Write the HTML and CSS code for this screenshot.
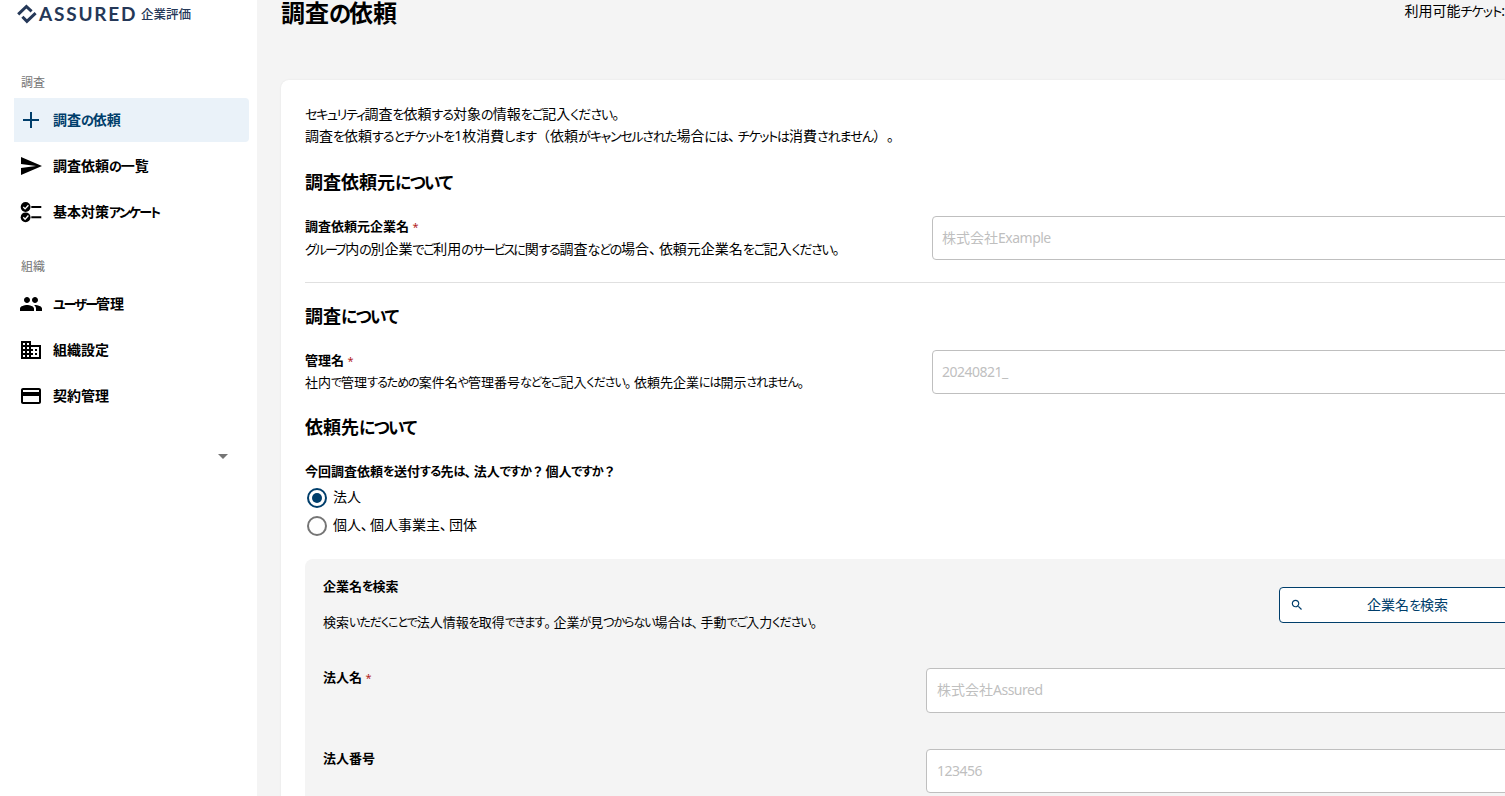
FILE: index.html
```html
<!DOCTYPE html>
<html lang="ja">
<head>
<meta charset="utf-8">
<title>調査の依頼</title>
<link rel="stylesheet" href="styles.css">
</head>
<body>
<div class="app">
  <aside class="sidebar">
    <div class="logo">
      <svg class="logo-mark" width="20" height="20" viewBox="0 0 20 20"><path d="M1.2 10.4 9.4 2.5 14.6 7.4M5.4 12.7 9.9 17.3 18.6 9.1" fill="none" stroke="#253858" stroke-width="3"/></svg>
      <span class="logo-name">ASSURED</span><span class="logo-sub">企業評価</span>
    </div>
    <div class="nav-label">調査</div>
    <nav class="nav">
      <a class="nav-item active"><svg viewBox="0 0 24 24"><path d="M20 13h-7v7h-2v-7H4v-2h7V4h2v7h7v2z"/></svg><span>調査<i class="h">の</i>依頼</span></a>
      <a class="nav-item"><svg viewBox="0 0 24 24"><path d="M2.01 21 23 12 2.01 3 2 10l15 2-15 2z"/></svg><span>調査依頼<i class="h">の</i>一覧</span></a>
      <a class="nav-item"><svg viewBox="0 0 24 24"><circle cx="6.6" cy="7" r="4.9"/><circle cx="6.6" cy="17.3" r="4.9"/><path d="M12.3 6h10v2h-10zM12.3 16.2h10v2h-10z"/><path d="m4.3 7 1.8 1.9 3.3-3.7M4.3 17.3l1.8 1.9 3.3-3.7" fill="none" stroke="#fff" stroke-width="1.3"/></svg><span>基本対策<i class="t">アンケート</i></span></a>
    </nav>
    <div class="nav-label second">組織</div>
    <nav class="nav">
      <a class="nav-item"><svg viewBox="0 0 24 24"><path d="M16 11c1.66 0 2.99-1.34 2.99-3S17.66 5 16 5s-3 1.34-3 3 1.34 3 3 3zm-8 0c1.66 0 2.99-1.34 2.99-3S9.66 5 8 5 5 6.34 5 8s1.34 3 3 3zm0 2c-2.33 0-7 1.17-7 3.5V19h14v-2.500C15 14.170 10.330 13 8 13zm8 0c-.29 0-.62.02-.97.05 1.16.84 1.970 1.970 1.970 3.450V19h6v-2.500c0-2.330-4.670-3.500-7-3.500z"/></svg><span><i class="t">ユーザー</i>管理</span></a>
      <a class="nav-item"><svg viewBox="0 0 24 24"><path d="M12 7V3H2v18h20V7H12zM6 19H4v-2h2v2zm0-4H4v-2h2v2zm0-4H4V9h2v2zm0-4H4V5h2v2zm4 12H8v-2h2v2zm0-4H8v-2h2v2zm0-4H8V9h2v2zm0-4H8V5h2v2zm10 12h-8v-2h2v-2h-2v-2h2v-2h-2V9h8v10zm-2-8h-2v2h2v-2zm0 4h-2v2h2v-2z"/></svg><span>組織設定</span></a>
      <a class="nav-item"><svg viewBox="0 0 24 24"><path d="M20 4H4c-1.110 0-1.990.89-1.990 2L2 18c0 1.110.89 2 2 2h16c1.110 0 2-.89 2-2V6c0-1.110-.89-2-2-2zm0 14H4v-6h16v6zm0-10H4V6h16v2z"/></svg><span>契約管理</span></a>
    </nav>
    <div class="account"><svg width="24" height="24" viewBox="0 0 24 24"><path d="m7 10 5 5 5-5z"/></svg></div>
  </aside>

  <main class="main">
    <header class="topbar">
      <h1>調査<i class="h">の</i>依頼</h1>
      <div class="tickets">利用可能<i class="t">チケット</i>:</div>
    </header>
    <section class="card">
      <p class="lead"><i class="t">セキュリティ</i>調査<i class="h">を</i>依頼<i class="h">する</i>対象<i class="h">の</i>情報<i class="h">をご</i>記入<i class="h">ください</i><i class="p">。</i><br>調査<i class="h">を</i>依頼<i class="h">すると</i><i class="t">チケット</i><i class="h">を</i>1枚消費<i class="h">します</i><span class="full">（</span>依頼<i class="h">が</i><i class="t">キャンセル</i><i class="h">された</i>場合<i class="h">には</i><i class="p">、</i><i class="t">チケット</i><i class="h">は</i>消費<i class="h">されません</i><span class="full">）。</span></p>

      <h2>調査依頼元<i class="h">について</i></h2>
      <div class="field">
        <div class="field-text">
          <div class="label">調査依頼元企業名 <b class="req">*</b></div>
          <div class="help large"><i class="t">グループ</i>内<i class="h">の</i>別企業<i class="h">でご</i>利用<i class="h">の</i><i class="t">サービス</i><i class="h">に</i>関<i class="h">する</i>調査<i class="h">などの</i>場合<i class="p">、</i>依頼元企業名<i class="h">をご</i>記入<i class="h">ください</i><i class="p">。</i></div>
        </div>
        <div class="input">株式会社<span class="latin">Example</span></div>
      </div>
      <hr>

      <h2>調査<i class="h">について</i></h2>
      <div class="field">
        <div class="field-text">
          <div class="label">管理名 <b class="req">*</b></div>
          <div class="help">社内<i class="h">で</i>管理<i class="h">するための</i>案件名<i class="h">や</i>管理番号<i class="h">などをご</i>記入<i class="h">ください</i><i class="p">。</i>依頼先企業<i class="h">には</i>開示<i class="h">されません</i><i class="p">。</i></div>
        </div>
        <div class="input"><span class="latin">20240821_</span></div>
      </div>

      <h2>依頼先<i class="h">について</i></h2>
      <div class="label question">今回調査依頼<i class="h">を</i>送付<i class="h">する</i>先<i class="h">は</i><i class="p">、</i>法人<i class="h">ですか</i><span class="q">？</span>個人<i class="h">ですか</i><span class="q">？</span></div>
      <div class="radio on"><svg width="24" height="24" viewBox="0 0 24 24"><circle cx="12" cy="12" r="9" fill="none" stroke="currentColor" stroke-width="2"/><circle cx="12" cy="12" r="5" fill="currentColor"/></svg><span>法人</span></div>
      <div class="radio"><svg width="24" height="24" viewBox="0 0 24 24"><circle cx="12" cy="12" r="9" fill="none" stroke="currentColor" stroke-width="2"/></svg><span>個人<i class="p">、</i>個人事業主<i class="p">、</i>団体</span></div>

      <div class="panel">
        <div class="panel-head">
          <div class="panel-text">
            <div class="label">企業名<i class="h">を</i>検索</div>
            <div class="help">検索<i class="h">いただくことで</i>法人情報<i class="h">を</i>取得<i class="h">できます</i><i class="p">。</i>企業<i class="h">が</i>見<i class="h">つからない</i>場合<i class="h">は</i><i class="p">、</i>手動<i class="h">でご</i>入力<i class="h">ください</i><i class="p">。</i></div>
          </div>
          <div class="button"><svg width="14" height="14" viewBox="0 0 24 24"><path d="M15.500 14h-.79l-.28-.27C15.410 12.590 16 11.110 16 9.500 16 5.910 13.090 3 9.500 3S3 5.910 3 9.500 5.910 16 9.500 16c1.610 0 3.090-.59 4.230-1.570l.27.28v.79l5 4.990L20.490 19l-4.990-5zm-6 0C7.010 14 5 11.990 5 9.500S7.010 5 9.500 5 14 7.010 14 9.500 11.990 14 9.500 14z"/></svg><span>企業名<i class="h">を</i>検索</span></div>
        </div>
        <div class="field tall">
          <div class="field-text"><div class="label">法人名 <b class="req">*</b></div></div>
          <div class="input">株式会社<span class="latin">Assured</span></div>
        </div>
        <div class="field">
          <div class="field-text"><div class="label">法人番号</div></div>
          <div class="input"><span class="latin">123456</span></div>
        </div>
      </div>
    </section>
  </main>
</div>
</body>
</html>
```
FILE: styles.css
```css
* { box-sizing: border-box; }
html, body { margin: 0; height: 100%; overflow: hidden; }
body {
  font-family: "Noto Sans", "Noto Sans CJK JP", sans-serif;
  font-size: 14px;
  line-height: 22px;
  color: #000;
  white-space: nowrap;
}

/* Kana and punctuation are set tighter than kanji */
i { font-style: normal; font-feature-settings: "palt"; }
.h { font-size: .93em; letter-spacing: -.09em; }
.t { font-size: .93em; letter-spacing: -.12em; }
.p { margin-right: .2em; }
.q { margin-right: .08em; }
.full { text-spacing-trim: space-all; }
.latin { letter-spacing: -.5px; }

.app { display: flex; height: 796px; background: #f4f4f4; }

.sidebar { flex: 0 0 257px; background: #fff; padding: 0 8px 0 14px; }
.logo { display: flex; align-items: center; height: 28px; padding-left: 3px; color: #253858; }
.logo-mark { display: block; flex: none; }
.logo-name { font: 700 19px/28px Lato, sans-serif; letter-spacing: 1.8px; margin-left: 2px; width: 102px; }
.logo-sub { font-size: 12.500px; font-weight: 500; line-height: 28px; padding-top: 2px; }
.nav-label { font-size: 12px; line-height: 18px; color: #757575; padding-left: 7px; margin: 46px 0 6px; }
.nav-label.second { margin: 24px 0 6px; }
.nav { display: flex; flex-direction: column; gap: 2px; }
.nav-item { display: flex; align-items: center; gap: 10px; height: 44px; padding-left: 5px; font-weight: 700; border-radius: 0 4px 4px 0; }
.nav-item svg { width: 24px; height: 24px; flex: none; }
.nav-item span { padding-bottom: 1px; }
.nav-item .t { letter-spacing: -.14em; }
.nav-item.active { background: #eaf2f9; color: #003e6b; fill: #003e6b; }
.account { display: flex; justify-content: flex-end; padding: 26px 14px 0 0; fill: #757575; }

.main { flex: 1; min-width: 0; padding-left: 24px; overflow: hidden; }
.topbar { display: flex; justify-content: space-between; height: 80px; }
h1 { margin: 0; font-size: 24px; line-height: 26px; }
.tickets { line-height: 22px; }
.tickets .t { letter-spacing: -.07em; }
.card { width: 1300px; height: 760px; background: #fff; border-radius: 8px 0 0 0; padding: 23px 24px; box-shadow: 0 0 2px rgba(0,0,0,.08); }
.lead { margin: 0; }
.lead .h { letter-spacing: -.075em; }
.lead .t { letter-spacing: -.1em; }
h2 { margin: 20px 0; font-size: 18px; line-height: 27px; }
.lead + h2 { margin-top: 22px; }
.field { display: flex; height: 44px; }
.field-text { flex: 0 0 627px; }
.label { font-size: 13px; font-weight: 700; line-height: 20px; padding-bottom: 2px; }
.question .h { letter-spacing: -.06em; }
.req { color: #b3261e; font-weight: 400; font-size: 11px; }
.help { font-size: 13px; line-height: 19px; }
.help.large { font-size: 14px; line-height: 19px; }
.help.large .h { letter-spacing: -.1em; }
.help.large .t { letter-spacing: -.15em; }
.input { flex: 1; border: 1px solid #bfbfbf; border-radius: 4px; background: #fff; color: #bfbfbf; padding-left: 9px; line-height: 42px; font-size: 14px; }
hr { margin: 22px 0 0; border: 0; height: 1px; background: #e0e0e0; }
.radio { display: flex; align-items: center; height: 28px; gap: 4px; color: #757575; }
.radio svg { flex: none; }
.radio span { color: #000; line-height: 24px; padding-bottom: 2px; }
.radio .p { margin-right: .14em; }
.radio.on { color: #003e6b; }
.panel { margin-top: 19px; height: 300px; padding: 17px 18px; background: #f4f4f4; border-radius: 8px 0 0 0; }
.panel-head { display: flex; height: 92px; }
.panel-text { flex: 0 0 956px; }
.panel-text .help { margin-top: 14px; }
.button { flex: none; width: 256px; height: 36px; margin-top: 11px; display: flex; align-items: center; border: 1px solid #003e6b; border-radius: 4px; background: #fff; color: #003e6b; fill: #003e6b; padding-left: 10px; }
.button span { flex: 1; text-align: center; padding: 0 23px 1px 0; }
.panel .field-text { flex-basis: 603px; }
.panel .field .label { line-height: 19px; }
.panel .input { padding-left: 10px; }
.tall { height: 45px; margin-bottom: 36px; }
```
